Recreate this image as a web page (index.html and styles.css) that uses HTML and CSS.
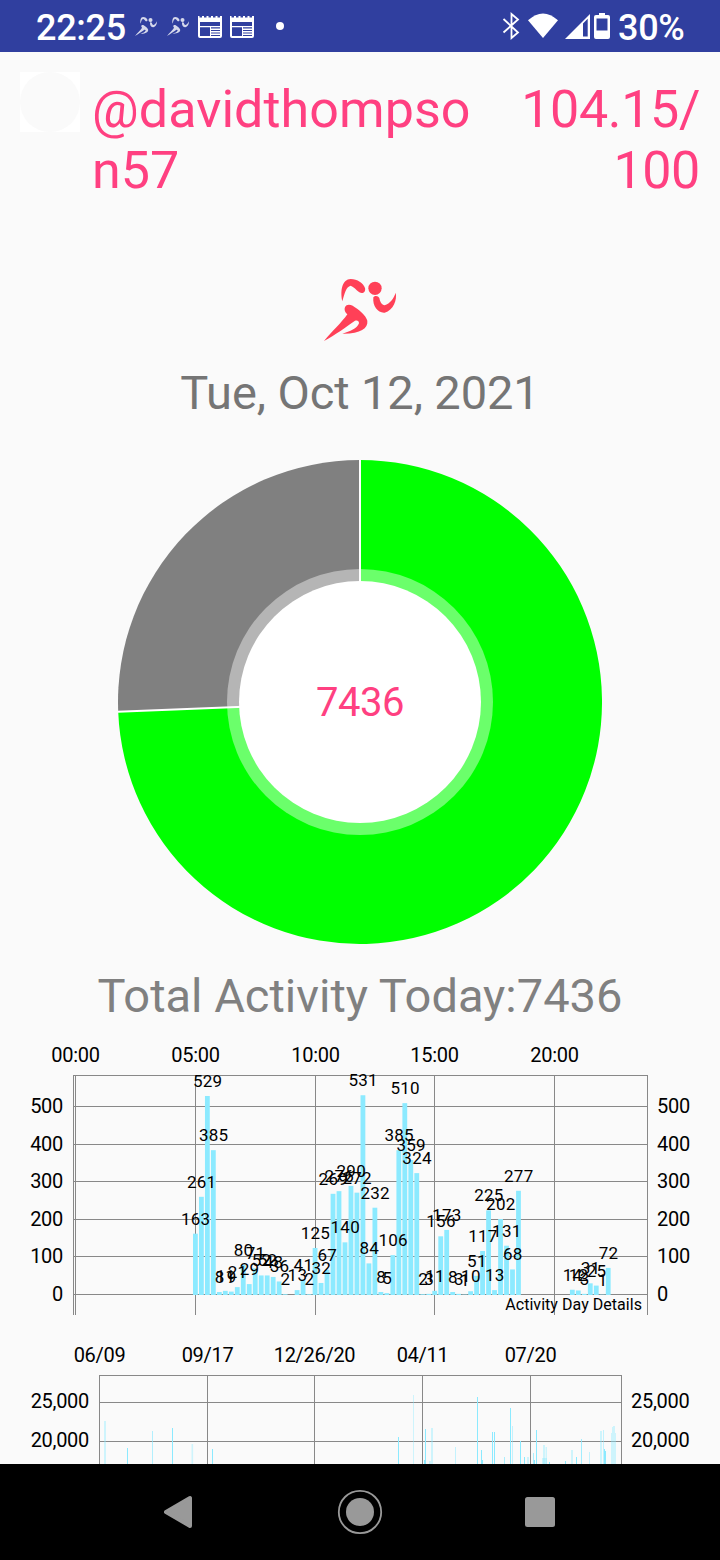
FILE: index.html
```html
<!DOCTYPE html>
<html lang="en">
<head>
<meta charset="utf-8">
<title>Activity</title>
<link rel="stylesheet" href="styles.css">
</head>
<body>
<svg class="defs" aria-hidden="true">
  <symbol id="runner" viewBox="0 0 360 300">
    <path d="M127 124C120 90 127 58 152 57C172 57 190 70 195 84C198 96 188 103 178 97C168 90 162 80 152 77C138 80 134 100 127 124Z"/>
    <circle cx="225" cy="85" r="20"/>
    <path d="M220 112C225 105 235 107 238 114C240 125 245 135 254 136C270 130 282 115 287 98C292 120 280 150 254 158C235 160 217 140 220 112Z"/>
    <path d="M134 145C136 133 148 132 158 137C175 148 198 165 202 182C205 205 180 222 127 221C150 215 172 205 177 190C177 182 172 180 165 182C140 200 105 225 72 243C95 215 125 188 142 163C136 158 133 152 134 145Z"/>
  </symbol>
  <symbol id="news" viewBox="0 0 24 22">
    <path fill-rule="evenodd" d="M0 0H1.5V1.5H4V0H6V1.5H8.500V0H10.500V1.500H13V0H15V1.500H17.500V0H19.500V1.500H22V0H24V20Q24 22 22 22H2Q0 22 0 20ZM2 6V10H22V6ZM2 11.300V20H12V11.300ZM13 11.300V12.500H22V11.300ZM13 14V15H22V14ZM13 16.500V17.500H22V16.500ZM13 19V20H22V19Z"/>
  </symbol>
</svg>
<header class="status">
  <span class="clock">22:25</span>
  <svg class="mini" viewBox="72 57 217 186"><use href="#runner" width="360" height="300"/></svg>
  <svg class="mini" viewBox="72 57 217 186"><use href="#runner" width="360" height="300"/></svg>
  <svg class="news"><use href="#news"/></svg>
  <svg class="news"><use href="#news"/></svg>
  <span class="dot"></span>
  <svg class="radios" viewBox="500 10 112 32">
    <path d="M503.500 19L518 32.500L511.500 38V14L518 19.500L503.500 32.500" fill="none" stroke="#fff" stroke-width="1.800"/>
    <path d="M528 20.300Q543 6.500 558 20.300L543 38Z"/>
    <path fill-rule="evenodd" d="M565 39L590 14V39ZM583 23.500V36.500H587.700V18.800Z"/>
    <path fill-rule="evenodd" d="M599 13H605V15H608Q610 15 610 17V37Q610 39 608 39H596Q594 39 594 37V17Q594 15 596 15H599ZM596.500 18.500V30.500H607.500V18.500Z"/>
  </svg>
  <span class="battery">30%</span>
</header>
<main class="page">
  <section class="profile">
    <div class="avatar"><span></span></div>
    <div class="name">@davidthompso<br>n57</div>
    <div class="score">104.15/<br>100</div>
  </section>
  <svg class="logo"><use href="#runner"/></svg>
  <h1 class="date">Tue, Oct 12, 2021</h1>
  <svg class="donut" viewBox="118 460 484 484">
    <path d="M360 702V460A242 242 0 1 1 118.200 711.700Z" fill="#0f0"/>
    <path d="M360 702L118.200 711.700A242 242 0 0 1 360 460Z" fill="#808080"/>
    <path d="M118 711.700L360 702V460" fill="none" stroke="#fff" stroke-width="2"/>
    <circle cx="360" cy="702" r="133" fill="#fff" fill-opacity=".42"/>
    <circle cx="360" cy="702" r="121" fill="#fff"/>
    <text x="360" y="716" class="count">7436</text>
  </svg>
  <h2 class="total">Total Activity Today:7436</h2>
  <svg id="day" class="day" viewBox="0 1035 720 290"></svg>
  <svg id="history" class="history" viewBox="0 1335 720 129"></svg>
</main>
<nav class="nav">
  <svg class="back" viewBox="164 1489 29 46"><path d="M166 1512L190 1498V1526Z" stroke="#999" stroke-width="4" stroke-linejoin="round"/></svg>
  <svg viewBox="337 1489 46 46"><circle cx="360" cy="1512" r="21.200" fill="none" stroke="#999" stroke-width="1.800"/><circle cx="360" cy="1512" r="14"/></svg>
  <svg viewBox="525 1489 30 46"><rect x="525" y="1497" width="30" height="30" rx="2.500"/></svg>
</nav>
<script src="charts.js"></script>
</body>
</html>
```

FILE: styles.css
```css
* { box-sizing: border-box; }
body {
  margin: 0;
  width: 720px;
  height: 1560px;
  display: flex;
  flex-direction: column;
  overflow: hidden;
  background: #fafafa;
  font-family: Roboto, sans-serif;
}
svg { display: block; flex: none; }
.defs { display: none; }
.status {
  height: 52px;
  flex: none;
  display: flex;
  align-items: center;
  padding-left: 36px;
  background: #303f9f;
  color: #fff;
  fill: #fff;
  font-size: 36px;
  font-weight: 500;
  line-height: 54px;
}
.clock { width: 99px; padding-top: 3px; letter-spacing: -.3px; }
.mini { width: 22px; height: 19px; margin-right: 10px; opacity: .8; }
.news { width: 24px; height: 22px; margin: 2px 8px 0 0; }
.mini + .news { margin-left: -1px; }
.dot { width: 8px; height: 8px; margin-left: 14px; border-radius: 50%; background: #fff; }
.radios { width: 112px; height: 32px; margin-left: 216px; }
.battery { margin-left: 6px; padding-top: 3px; letter-spacing: -.3px; }
.page { height: 1412px; flex: none; overflow: hidden; display: flex; flex-direction: column; align-items: center; }
.profile {
  width: 720px;
  height: 208px;
  flex: none;
  display: flex;
  padding: 20px 20px 0;
  color: #ff4081;
  font-size: 52px;
  line-height: 61px;
}
.avatar { width: 60px; height: 60px; background: #fff; }
.avatar span { display: block; height: 60px; border-radius: 50%; background: #fafafa; }
.name { margin: 7px 0 0 12px; letter-spacing: .07px; }
.score { margin: 7px 0 0 auto; text-align: right; letter-spacing: -.35px; }
.logo { width: 120px; height: 100px; fill: #ff4057; }
.date, .total { margin: 0; flex: none; font-size: 47px; font-weight: 400; line-height: 56px; white-space: nowrap; }
.date { height: 95px; padding-top: 5px; color: #757575; letter-spacing: -.1px; }
.donut { width: 484px; height: 484px; margin-top: 5px; }
.count { font-size: 40px; fill: #ff4081; text-anchor: middle; letter-spacing: -.5px; }
.total { height: 67px; margin-top: 24px; color: #808080; }
.day { width: 720px; height: 290px; }
.history { width: 720px; height: 129px; margin-top: 10px; }
.grid { stroke: #888; stroke-width: 1; fill: none; shape-rendering: crispEdges; }
.bar { fill: #8ceaff; }
.axis { font-size: 20px; fill: #000; letter-spacing: -.3px; }
.value { font-size: 17px; fill: #000; text-anchor: middle; letter-spacing: .25px; }
.note { font-size: 16px; fill: #000; text-anchor: end; letter-spacing: .04px; }
.mid { text-anchor: middle; }
.end { text-anchor: end; }
.nav {
  height: 96px;
  flex: none;
  display: grid;
  grid-template-columns: 180px 180px 180px;
  justify-content: center;
  place-items: center;
  background: #000;
  fill: #999;
}
.nav svg { height: 46px; }
.nav .back { margin-right: 4px; }
```

FILE: charts.js
```js
const NS = 'http://www.w3.org/2000/svg';
function add(parent, tag, attrs, text) {
  const el = document.createElementNS(NS, tag);
  for (const key in attrs) el.setAttribute(key, attrs[key]);
  if (text !== undefined) el.textContent = text;
  parent.appendChild(el);
}
function line(parent, x1, y1, x2, y2) {
  add(parent, 'path', { d: `M${x1} ${y1}L${x2} ${y2}`, class: 'grid' });
}

// Steps per quarter hour, starting at 05:00.
const day = document.getElementById('day');
const quarters = [163,261,529,385,8,11,9,21,80,29,71,52,52,48,36,2,0,13,41,2,
  125,32,67,269,276,140,290,272,531,84,232,8,5,106,385,510,359,324,2,3,
  11,156,173,8,3,1,10,51,117,225,13,202,131,68,277,0,0,0,0,0,
  0,0,0,14,12,3,31,25,1,72];
line(day, 73, 1075.5, 648, 1075.5);
line(day, 73.5, 1075, 73.5, 1315);
line(day, 647.5, 1075, 647.5, 1315);
[1294.5, 1256.5, 1219.5, 1181.5, 1144.5, 1106.5].forEach((y, i) => {
  line(day, 73, y, 648, y);
  add(day, 'text', { x: 63, y: y + 6.5, class: 'axis end' }, i * 100);
  add(day, 'text', { x: 657, y: y + 6.5, class: 'axis' }, i * 100);
});
[75.5, 195.5, 315.5, 434.5, 554.5].forEach((x, i) => {
  line(day, x, 1075, x, 1315);
  add(day, 'text', { x, y: 1062, class: 'axis mid' }, ['00:00', '05:00', '10:00', '15:00', '20:00'][i]);
});
const placed = quarters.map((v, i) => ({ v, x: 195.4 + i * 5.983, h: v * .3762 })).filter(b => b.v);
placed.forEach(b => add(day, 'rect', { x: b.x - 2.4, y: 1295 - b.h, width: 4.8, height: b.h, class: 'bar' }));
placed.forEach(b => add(day, 'text', { x: b.x + .3, y: 1286 - b.h, class: 'value' }, b.v));
add(day, 'text', { x: 642, y: 1310, class: 'note' }, 'Activity Day Details');

// Daily totals: position, top, width, opacity.
const history = document.getElementById('history');
line(history, 99, 1375.5, 622, 1375.5);
line(history, 99.5, 1375, 99.5, 1464);
line(history, 621.5, 1375, 621.5, 1464);
[[1402.5, '25,000'], [1441.5, '20,000']].forEach(([y, label]) => {
  line(history, 99, y, 622, y);
  add(history, 'text', { x: 89, y: y + 5.5, class: 'axis end' }, label);
  add(history, 'text', { x: 631, y: y + 5.5, class: 'axis' }, label);
});
[[99.5, '06/09'], [207.5, '09/17'], [314.5, '12/26/20'], [422.5, '04/11'], [530.5, '07/20']].forEach(([x, label]) => {
  line(history, x, 1375, x, 1464);
  add(history, 'text', { x, y: 1362, class: 'axis mid' }, label);
});
[[104,1421,2,.4],[127,1448,1,1],[152,1431,1,.65],[172,1428,1,1],[191.5,1444,1.6,.4],[212,1449,1,1],
 [398,1437,1,1],[413,1395,1,.4],[424,1460,1,1],[425,1429,1,1],[431,1428,2,.4],[429,1461,2,.4],
 [455,1447,1,.5],[477,1397,1,1],[481,1450,1,1],[482,1460,1,1],[492,1432,1,1],[494,1432,1,1],
 [504,1457,1,.7],[510,1408,1,1],[512,1426,1,.5],[520,1441,1,1],[524,1457,1,1],[527,1457,2,.4],
 [533,1453,1,.7],[534,1460,1,1],[536,1430,1,1],[542,1458,5,.4],[543,1445,2,.4],[545.500,1447,1.5,.4],
 [549,1462,1,1],[565,1461,1,1],[571,1450,2,.4],[576,1457,1,1],[581,1439,1,.8],[589,1452,1,.5],
 [600,1431,2,.4],[603,1430,1,.5],[604,1449,1,1],[605,1451,1,1],[611,1433,1,.4],[612,1427,1,.4],
 [613,1426,2,.4],[615,1433,1,.4]].forEach(([x, y, width, opacity]) => {
  add(history, 'rect', { x, y, width, height: 1464 - y, opacity, class: 'bar' });
});
```
